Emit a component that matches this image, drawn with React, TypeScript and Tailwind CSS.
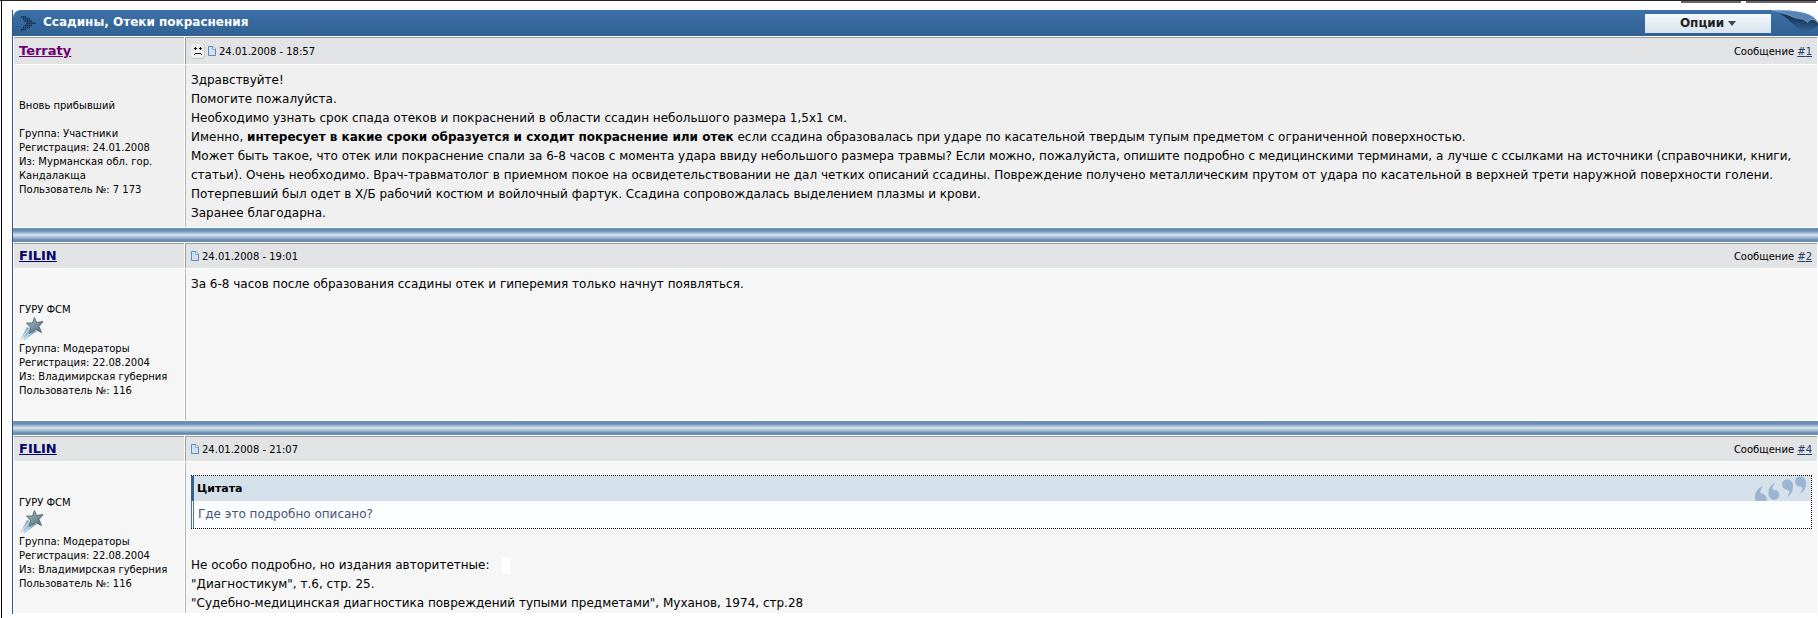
import type { ReactNode } from 'react';

type Post = {
  id: number;
  author: string;
  visited?: boolean;
  smile?: boolean;
  date: string;
  title: string;
  star?: boolean;
  info: string[];
  bodyClass: string;
  body: ReactNode;
};

const filin = {
  author: 'FILIN',
  title: 'ГУРУ ФСМ',
  star: true,
  info: ['Группа: Модераторы', 'Регистрация: 22.08.2004', 'Из: Владимирская губерния', 'Пользователь №: 116'],
};

const posts: Post[] = [
  {
    id: 1,
    author: 'Terraty',
    visited: true,
    smile: true,
    date: '24.01.2008 - 18:57',
    title: 'Вновь прибывший',
    info: [
      'Группа: Участники',
      'Регистрация: 24.01.2008',
      'Из: Мурманская обл. гор. Кандалакща',
      'Пользователь №: 7 173',
    ],
    bodyClass: 'bg-[#f0f0f0] pb-1',
    body: (
      <>
        <p>Здравствуйте!</p>
        <p>Помогите пожалуйста.</p>
        <p>Необходимо узнать срок спада отеков и покраснений в области ссадин небольшого размера 1,5х1 см.</p>
        <p>
          Именно, <b>интересует в какие сроки образуется и сходит покраснение или отек</b> если ссадина образовалась при
          ударе по касательной твердым тупым предметом с ограниченной поверхностью.
        </p>
        <p>
          Может быть такое, что отек или покраснение спали за 6-8 часов с момента удара ввиду небольшого размера травмы?
          Если можно, пожалуйста, опишите подробно с медицинскими терминами, а лучше с ссылками на источники
          (справочники, книги, статьи). Очень необходимо. Врач-травматолог в приемном покое на освидетельствовании не дал
          четких описаний ссадины. Повреждение получено металлическим прутом от удара по касательной в верхней трети
          наружной поверхности голени.
        </p>
        <p>Потерпевший был одет в Х/Б рабочий костюм и войлочный фартук. Ссадина сопровождалась выделением плазмы и крови.</p>
        <p>Заранее благодарна.</p>
      </>
    ),
  },
  {
    ...filin,
    id: 2,
    date: '24.01.2008 - 19:01',
    bodyClass: 'bg-[#f6f6f6] min-h-[151px]',
    body: <p>За 6-8 часов после образования ссадины отек и гиперемия только начнут появляться.</p>,
  },
  {
    ...filin,
    id: 4,
    date: '24.01.2008 - 21:07',
    bodyClass: 'bg-[#f6f6f6]',
    body: (
      <>
        <Quote>Где это подробно описано?</Quote>
        <p>
          Не особо подробно, но издания авторитетные:
          <span className="ml-3 inline-block h-4 w-2 bg-white align-middle" />
        </p>
        <p>"Диагностикум", т.6, стр. 25.</p>
        <p>"Судебно-медицинская диагностика повреждений тупыми предметами", Муханов, 1974, стр.28</p>
      </>
    ),
  },
];

function QuoteMarks() {
  return (
    <svg width="52" height="25" viewBox="0 0 52 25" fill="#9bb4d0" aria-hidden="true">
      <path d="M8 10 C3 12 0 16 0 21 C0 23 0 25 2 27 H11 C13 23 11 17 6 17.500 C5 17 5 14 8 10 Z" />
      <path d="M20 7 C15 9 13 14 13.500 18 C14 23 18 24.500 21 23.500 C26 22 25 14 19.500 14 C17 14 17 11 20 7 Z" />
      <path d="M30 4 C34 2.500 38 5 38 10 C38 15 36 19 32 21 C35 17 35 14 31.500 13.500 C26 13 26 5 30 4 Z" />
      <path d="M43 1 C47 -0.500 51 2 51 7 C51 12 49 16 45 17.500 C48 13 48 11 44.500 10.500 C39 10 39 2 43 1 Z" />
    </svg>
  );
}

function Quote({ children }: { children: ReactNode }) {
  return (
    <blockquote className="mt-[7px] mb-[27px] border border-l-0 border-dotted border-black">
      <div className="flex h-[25px] items-center justify-between border-l-[3px] border-[#35608f] bg-[#d5e1ea] pr-1 pl-[3px]">
        <span className="text-[11px] font-bold">Цитата</span>
        <QuoteMarks />
      </div>
      <div className="border-l-[3px] border-double border-[#4a739c] bg-[#fbfdff] p-1 text-[#465575]">{children}</div>
    </blockquote>
  );
}

function ArrowIcon() {
  const rows = ['11100000', '01111000', '00111100', '00011111', '00111100', '01111000', '11100000'];
  return (
    <svg width="15" height="15" viewBox="0 0 16 14" fill="#0e2038" preserveAspectRatio="none" aria-hidden="true">
      {rows.flatMap((row, y) =>
        [...row].map((c, x) => (c === '1' ? <rect key={`${x}-${y}`} x={x * 2} y={y * 2} width="1.4" height="1.4" /> : null)),
      )}
    </svg>
  );
}

function SmileIcon() {
  return (
    <svg width="14" height="16" viewBox="0 0 14 16" aria-hidden="true">
      <rect y="1" width="14" height="15" rx="3" fill="#c6c6c6" />
      <rect y="1" width="13" height="14" rx="3" fill="#efefef" />
      <path d="M4 4h1v1h1v1H5v1H4V6H3V5h1zM9 4h1v1h1v1h-1v1H9V6H8V5h1zM4 10h6v1H4zM3 11h1v1H3zM10 11h1v1h-1z" fill="#111" />
    </svg>
  );
}

function PageIcon() {
  return (
    <svg width="8" height="10" viewBox="0 0 8 10" aria-hidden="true">
      <path d="M.5.5h4.500l2.500 2.500v6.500h-7z" fill="#cfe1f2" stroke="#5f8ab5" />
      <path d="M4.500.5v3h3" fill="#fff" stroke="#5f8ab5" strokeWidth=".7" />
    </svg>
  );
}

function StarIcon() {
  return (
    <svg width="26" height="25" viewBox="0 0 26 25" aria-hidden="true">
      <defs>
        <linearGradient id="trail" x1="1" y1="0" x2="0" y2="1">
          <stop offset="0" stopColor="#6b95b2" />
          <stop offset="1" stopColor="#b4d0e6" />
        </linearGradient>
        <linearGradient id="star" x1="0" y1="0" x2="1" y2="1">
          <stop offset="0" stopColor="#a9bfc4" />
          <stop offset="1" stopColor="#4f6a74" />
        </linearGradient>
      </defs>
      <path d="M1 23 L8 10 L18 14 L4 24 L6 20 Z" fill="url(#trail)" />
      <path d="M3 21 L11 11 M6 21 L14 14" stroke="#fff" strokeWidth=".8" />
      <path
        d="M15.500 0.500 L17.500 5.500 L24 4.500 L20 9.500 L22.500 15.500 L16.500 12.500 L10.500 16.500 L11.500 10.500 L7.500 6 L13.500 6 Z"
        fill="url(#star)"
        stroke="#48606b"
        strokeWidth=".8"
      />
    </svg>
  );
}

function PageCurl() {
  return (
    <svg className="h-[26px] w-[47px]" viewBox="0 0 47 26" aria-hidden="true">
      <defs>
        <linearGradient id="curl-shadow" x1="0.600" y1="0" x2="0.400" y2="1">
          <stop offset="0.200" stopColor="#15304f" />
          <stop offset="1" stopColor="#15304f" stopOpacity="0" />
        </linearGradient>
      </defs>
      <path d="M8 3 C18 8 22 16 30 20 C36 23 43 18 47 16 V10 H38 Z" fill="url(#curl-shadow)" />
      <path d="M8 0 H47 V13 C43 4 32 1 8 0 Z" fill="#fff" />
      <path
        d="M1 0.500 C22 0 42 2 46.500 12 C42 8 39 9 36.500 12.500 C33 8 27 9 22 7 C15 4 10 1.500 1 0.500 Z"
        fill="#5484b4"
        stroke="#9ab9d6"
        strokeWidth=".6"
      />
    </svg>
  );
}

function Separator() {
  return (
    <div className="h-[14px] bg-linear-to-b from-[#6a8db2] from-20% via-[#dbe6f2] via-50% to-[#6a8db2] to-85%" />
  );
}

function PostRow({ post }: { post: Post }) {
  return (
    <article className="grid grid-cols-[170px_1fr] gap-x-px p-px">
      <div className="flex items-center border-t border-[#999] bg-[#e2e3e5] px-[5px] leading-[24px]">
        <a href="#author" className={`text-[13px] font-bold underline ${post.visited ? 'text-[#700070]' : 'text-[#000066]'}`}>
          {post.author}
        </a>
      </div>
      <div
        className={`flex items-center justify-between border-t border-l border-[#999] bg-[#e2e3e5] px-[5px] text-[10px] ${post.smile ? 'py-[5px]' : ''}`}
      >
        <div className="flex items-center gap-[3px]">
          {post.smile && <SmileIcon />}
          <PageIcon />
          <span>{post.date}</span>
        </div>
        <span>
          Сообщение{' '}
          <a href={`#post-${post.id}`} className="text-[#22406b] underline">
            #{post.id}
          </a>
        </span>
      </div>
      <div className={`mt-px px-[5px] pt-[34px] text-[10px] leading-[14px] ${post.bodyClass}`}>
        <p>{post.title}</p>
        {post.star ? <StarIcon /> : <br />}
        {post.info.map((line) => (
          <p key={line}>{line}</p>
        ))}
      </div>
      <div className={`mt-px border-l border-[#b5b5b5] px-[5px] pt-[6px] text-[12px] leading-[19px] ${post.bodyClass}`}>
        {post.body}
      </div>
    </article>
  );
}

export default function App() {
  return (
    <div className="relative border-t border-[#2a2226] bg-white font-['DejaVu_Sans',sans-serif] text-black">
      <div className="absolute top-0 right-[2px] flex gap-[5px]">
        <span className="h-[2px] w-[60px] bg-[#6b6669]" />
        <span className="h-[2px] w-[70px] bg-[#6b6669]" />
      </div>
      <div className="ml-px border-l border-black pt-[9px] pb-1 pl-[10px]">
        <main className="border-l border-[#2f5580]">
          <header className="flex h-[26px] items-center rounded-tl-lg bg-linear-to-b from-[#3b70a8] to-[#316193] pl-2">
            <ArrowIcon />
            <h1 className="flex-1 pb-[2px] pl-[7px] text-[12px] font-bold text-white">Ссадины, Отеки покраснения</h1>
            <button className="flex h-[19px] w-[126px] items-center justify-center gap-1 bg-linear-to-b from-[#f4f8fb] to-[#d5e3ee] text-[12px] font-bold text-[#222]">
              Опции
              <svg width="8" height="5" viewBox="0 0 8 5" fill="#444" aria-hidden="true">
                <path d="M0 0h8L4 5z" />
              </svg>
            </button>
            <PageCurl />
          </header>
          {posts.map((post, i) => (
            <div key={post.id}>
              {i > 0 && <Separator />}
              <PostRow post={post} />
            </div>
          ))}
        </main>
      </div>
    </div>
  );
}
